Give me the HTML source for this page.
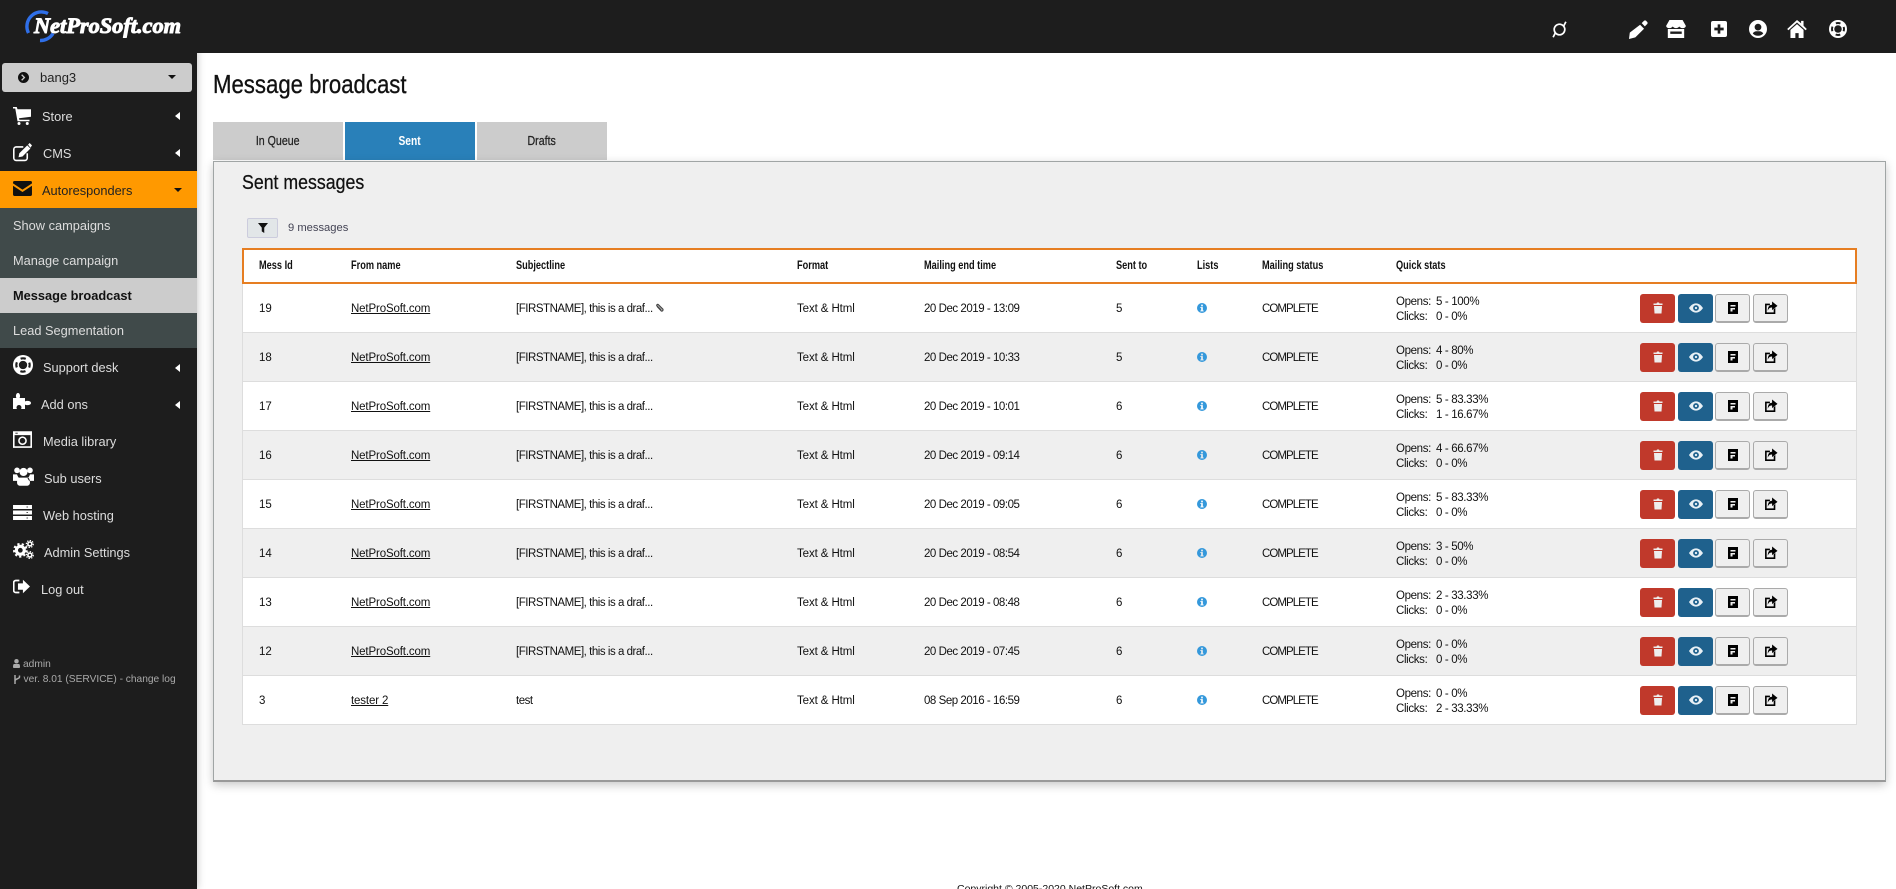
<!DOCTYPE html>
<html><head><meta charset="utf-8"><title>Message broadcast</title>
<style>
*{box-sizing:border-box}
html,body{margin:0;padding:0;width:1896px;height:889px;overflow:hidden;background:#fff;font-family:"Liberation Sans",sans-serif;color:#111}
#root{position:absolute;left:0;top:0;width:1896px;height:889px;overflow:hidden;background:#fff}
.a{position:absolute}
.t{position:absolute;white-space:nowrap;line-height:18px;transform:translateY(-9px)}
#top{left:0;top:0;width:1896px;height:53px;background:#1d1d1d;z-index:3}
#side{left:0;top:0;width:197px;height:889px;background:#1d1d1d;box-shadow:0 0 8px rgba(0,0,0,.25);z-index:2}
.m{font-size:12.8px;color:#ddd}
.sub{left:0;width:197px;background:#404a4a}
.i{position:absolute;fill:#fff}
.tab{position:absolute;top:122px;height:38px;width:130px;background:#ccc;text-align:center;line-height:38px;font-size:12.5px;color:#222;-webkit-text-stroke:.25px #222}
.tab span{display:inline-block;transform:scaleX(.85)}
#panel{left:213px;top:161px;width:1673px;height:621px;background:#efefef;border:1px solid #a0a5a5;border-bottom:2px solid #999;box-shadow:0 3px 9px rgba(0,0,0,.22)}
table{position:absolute;left:242px;top:248px;width:1615px;border-collapse:separate;border-spacing:0;table-layout:fixed;font-size:11.5px;color:#111}
th{height:36px;text-align:left;padding:0 0 0 17px;font-size:11.5px;background:#fff;border-top:2px solid #e67e22;border-bottom:2px solid #e67e22;color:#111;white-space:nowrap}
th span{display:inline-block;transform:scaleX(.8);transform-origin:left center}
th:first-child{border-left:2px solid #e67e22;padding-left:15px}th:last-child{border-right:2px solid #e67e22}
td{height:49px;padding:4px 0 0 17px;background:#fff;border-bottom:1px solid #ddd;line-height:15.5px;white-space:nowrap}
td:first-child{border-left:1px solid #ddd;padding-left:16px}td:last-child{border-right:1px solid #ddd}
td:nth-child(2){letter-spacing:-.14px}
td:nth-child(3){letter-spacing:-.47px}
td:nth-child(4){letter-spacing:-.1px}
td:nth-child(5){letter-spacing:-.46px}
td:nth-child(8){font-size:11.5px;letter-spacing:-.95px}
td:nth-child(9){letter-spacing:-.35px}
td:nth-child(7) svg{vertical-align:-1px}
tr.e td{background:#efefef}
td u{color:#111}
td i{font-style:normal;display:inline-block;width:40px}
.b{position:absolute;height:29px;width:35px;border-radius:3px}
.r{background:#c0392b;left:17px}
.v{background:#1f618d;left:55px}
.d{background:#efefef;border:1px solid #aaa;border-bottom-width:2px}
.d1{left:92px}.d2{left:130px}
.b svg{position:absolute;left:50%;top:50%;transform:translate(-50%,-50%)}
td.act{position:relative;padding:0}
.w{position:relative;height:29px}
</style></head><body>
<svg width="0" height="0" style="position:absolute">
<symbol id="trash" viewBox="0 0 24 24"><path d="M3 3h6l1-2h4l1 2h6v3H3zM4 8h16l-1 15H5z"/></symbol>
<symbol id="eye" viewBox="0 0 24 24"><path fill-rule="evenodd" d="M12 4C6 4 2 9 0 12c2 3 6 8 12 8s10-5 12-8c-2-3-6-8-12-8zm0 3a5 5 0 1 1 0 10 5 5 0 0 1 0-10zm0 3a2 2 0 1 0 0 4 2 2 0 0 0 0-4z"/></symbol>
<symbol id="doc" viewBox="0 0 24 24"><path fill-rule="evenodd" d="M2 0h20v24H2zM7 6v3h10V6zM7 12v7h4v-4h5v-3z"/></symbol>
<symbol id="share" viewBox="0 0 24 24"><path d="M1 4h9v3H4v13h13v-6l3-2v11H1z"/><path d="M14 0l10 8-10 8v-5c-4 0-6 1-8 6 0-7 3-11 8-11z"/></symbol>
<symbol id="info" viewBox="0 0 24 24"><path fill-rule="evenodd" d="M12 0a12 12 0 1 1 0 24 12 12 0 0 1 0-24zM10 4v4h4V4zM8 10v2h2v6H8v2h8v-2h-2v-8z"/></symbol>
<symbol id="life" viewBox="0 0 24 24"><circle cx="12" cy="12" r="12" fill="#fff"/><circle cx="12" cy="12" r="5" fill="#1d1d1d"/><circle cx="12" cy="12" r="8" fill="none" stroke="#1d1d1d" stroke-width="2.600" stroke-dasharray="6.280 6.280" stroke-dashoffset="3.140"/></symbol>
</svg>
<div id="root">

<div id="top" class="a">
 <svg class="a" style="left:0;top:0" width="197" height="53" viewBox="0 0 197 53">
  <path d="M28.500 33A14.500 14.500 0 0 1 48 13.500M53 33.500A14.500 14.500 0 0 1 40 40.500" fill="none" stroke="#2f6fe8" stroke-width="3.400"/>
  <text x="34" y="33" font-family="Liberation Serif,serif" font-style="italic" font-weight="bold" font-size="22" fill="#fff" stroke="#fff" stroke-width="1" stroke-linejoin="round" textLength="147" lengthAdjust="spacingAndGlyphs">NetProSoft.com</text>
 </svg>
 <svg class="i" style="left:1551px;top:21px" width="17" height="17" viewBox="0 0 24 24"><circle cx="12" cy="12" r="7.500" fill="none" stroke="#fff" stroke-width="2.400"/><path d="M3 23l3-6M21 1l-3 6" stroke="#fff" stroke-width="2.400" fill="none"/></svg>
 <svg class="i" style="left:1629px;top:20px" width="19" height="19" viewBox="0 0 24 24"><path d="M14 6l5 5-11 11-8 2 1-8zM16 4l3-3a2 2 0 0 1 2.500 0l1.500 1.500a2 2 0 0 1 0 2.500l-3 3z"/></svg>
 <svg class="i" style="left:1665px;top:20px" width="22" height="18" viewBox="0 0 24 22"><path d="M4 0h16l4 7c0 2-2 3-4 3s-3-1-4-2c-1 1-2 2-4 2s-3-1-4-2c-1 1-2 2-4 2S0 9 0 7zM2 11h20v11H2zM5 14v3h14v-3z" fill-rule="evenodd"/></svg>
 <svg class="i" style="left:1711px;top:21px" width="16" height="16" viewBox="0 0 24 24"><path fill-rule="evenodd" d="M3 0h18a3 3 0 0 1 3 3v18a3 3 0 0 1-3 3H3a3 3 0 0 1-3-3V3a3 3 0 0 1 3-3zm7 5v5H5v4h5v5h4v-5h5v-4h-5V5z"/></svg>
 <svg class="i" style="left:1749px;top:20px" width="18" height="18" viewBox="0 0 24 24"><path fill-rule="evenodd" d="M12 0a12 12 0 1 1 0 24 12 12 0 0 1 0-24zm0 5a4.500 4.500 0 1 0 0 9 4.500 4.500 0 0 0 0-9zm-7 13c2 2 4 3 7 3s5-1 7-3c-1-2-3-3-5-3h-4c-2 0-4 1-5 3z"/></svg>
 <svg class="i" style="left:1787px;top:20px" width="20" height="18" viewBox="0 0 24 22"><path d="M12 0l5 4V1h3v6l4 4-1.500 1.500L12 3 1.500 12.500 0 11zM12 5l8 7v10h-6v-6h-4v6H4V12z"/></svg>
 <svg class="a" style="left:1829px;top:20px" width="18" height="18"><use href="#life"/></svg>
</div>

<div id="side" class="a">
 <div class="a" style="left:2px;top:63px;width:190px;height:29px;background:#ccc;border-radius:3px"></div>
 <svg class="a" style="left:18px;top:72px" width="11" height="11" viewBox="0 0 24 24"><path fill="#111" fill-rule="evenodd" d="M12 0a12 12 0 1 1 0 24 12 12 0 0 1 0-24zM9 5L7 7l5 5-5 5 2 2 7-7z"/></svg>
 <div class="t" style="left:40px;top:78px;font-size:13px;color:#222">bang3</div>
 <div class="a" style="left:168px;top:75px;border:4px solid transparent;border-top:4px solid #111;border-bottom:0"></div>

 <svg class="i" style="left:13px;top:107px" width="18" height="18" viewBox="0 0 24 24"><path d="M0 0h5l1 3h18v10l-16 2 .4 2H22v2H6L3 2H0z"/><circle cx="8" cy="22" r="2"/><circle cx="19" cy="22" r="2"/></svg>
 <div class="t m" style="left:42px;top:116.500px">Store</div>
 <div class="a" style="left:175px;top:112px;border:4px solid transparent;border-right:5px solid #fff;border-left:0"></div>

 <svg class="i" style="left:13px;top:143px" width="19" height="19" viewBox="0 0 24 24"><path fill="none" stroke="#fff" stroke-width="2" d="M13 5H4a3 3 0 0 0-3 3v11a3 3 0 0 0 3 3h11a3 3 0 0 0 3-3v-6"/><path d="M18 3l4 4-10 10-5 1 1-5zM19 2l2-2 3 3-2 3z"/></svg>
 <div class="t m" style="left:43px;top:153.500px">CMS</div>
 <div class="a" style="left:175px;top:149px;border:4px solid transparent;border-right:5px solid #fff;border-left:0"></div>

 <div class="a" style="left:0;top:171px;width:197px;height:37px;background:#f90"></div>
 <svg class="a" style="left:13px;top:181px" width="19" height="15" viewBox="0 0 24 19"><path fill="#111" d="M2 0h20a2 2 0 0 1 2 2v1L12 11 0 3V2a2 2 0 0 1 2-2zM0 6l12 8 12-8v11a2 2 0 0 1-2 2H2a2 2 0 0 1-2-2z"/></svg>
 <div class="t m" style="left:42px;top:190.500px;color:#222">Autoresponders</div>
 <div class="a" style="left:174px;top:188px;border:4px solid transparent;border-top:4px solid #111;border-bottom:0"></div>

 <div class="a sub" style="top:208px;height:70px"></div>
 <div class="t m" style="left:13px;top:225.500px">Show campaigns</div>
 <div class="t m" style="left:13px;top:260.500px">Manage campaign</div>
 <div class="a" style="left:0;top:278px;width:197px;height:35px;background:#ccc"></div>
 <div class="t m" style="left:13px;top:296px;color:#111;font-weight:bold">Message broadcast</div>
 <div class="a sub" style="top:313px;height:35px"></div>
 <div class="t m" style="left:13px;top:330.500px">Lead Segmentation</div>

 <svg class="a" style="left:13px;top:355px" width="20" height="20"><use href="#life"/></svg>
 <div class="t m" style="left:43px;top:367.700px">Support desk</div>
 <div class="a" style="left:175px;top:363.500px;border:4px solid transparent;border-right:5px solid #fff;border-left:0"></div>

 <svg class="i" style="left:13px;top:392px" width="18" height="17" viewBox="0 0 18 17"><path d="M0 6h3.500c-1-1-.8-5 1.500-5s2.500 4 1.500 5H12v3.500c1-1 6-1 6 1.500s-5 2.500-6 1.500V17H8c1-1 .5-4-2-4s-3 3-2 4H0z"/></svg>
 <div class="t m" style="left:41px;top:404.500px">Add ons</div>
 <div class="a" style="left:175px;top:400.500px;border:4px solid transparent;border-right:5px solid #fff;border-left:0"></div>

 <svg class="i" style="left:13px;top:431px" width="19" height="17" viewBox="0 0 24 21"><path fill-rule="evenodd" d="M0 0h24v21H0zM2 5v14h20V5zM3 2v1h3V2zM12 6.500a5.500 5.500 0 1 1 0 11 5.500 5.500 0 0 1 0-11zm0 2a3.500 3.500 0 1 0 0 7 3.500 3.500 0 0 0 0-7z"/></svg>
 <div class="t m" style="left:43px;top:441.500px">Media library</div>

 <svg class="i" style="left:13px;top:466px" width="21" height="20" viewBox="0 0 26 24"><circle cx="5" cy="5" r="3.500"/><circle cx="21" cy="5" r="3.500"/><circle cx="13" cy="7" r="5"/><path d="M0 10h5c1 3 2 4 3 5l-2 3H0zM26 10h-5c-1 3-2 4-3 5l2 3h6zM8 14h10c2 0 3 3 3 6 0 3-2 4-4 4H9c-2 0-4-1-4-4 0-3 1-6 3-6z"/></svg>
 <div class="t m" style="left:44px;top:478.500px">Sub users</div>

 <svg class="i" style="left:13px;top:505px" width="19" height="15" viewBox="0 0 24 19"><path fill-rule="evenodd" d="M0 0h24v5H0zM0 7h24v5H0zM0 14h24v5H0zM17 2v1h2V2zM17 9v1h2V9zM17 16v1h2v-1z"/></svg>
 <div class="t m" style="left:43px;top:515.500px">Web hosting</div>

 <svg class="i" style="left:13px;top:540px" width="21" height="19" viewBox="0 0 26 24"><circle cx="9" cy="13" r="5" fill="none" stroke="#fff" stroke-width="4"/><circle cx="9" cy="13" r="8" fill="none" stroke="#fff" stroke-width="2.500" stroke-dasharray="2.800 2.800"/><circle cx="21" cy="5" r="2.500" fill="none" stroke="#fff" stroke-width="2"/><circle cx="21" cy="5" r="4.400" fill="none" stroke="#fff" stroke-width="1.500" stroke-dasharray="1.700 1.700"/><circle cx="21" cy="19" r="2.500" fill="none" stroke="#fff" stroke-width="2"/><circle cx="21" cy="19" r="4.400" fill="none" stroke="#fff" stroke-width="1.500" stroke-dasharray="1.700 1.700"/></svg>
 <div class="t m" style="left:44px;top:552.600px">Admin Settings</div>

 <svg class="i" style="left:13px;top:579px" width="17" height="15" viewBox="0 0 24 21"><path fill="none" stroke="#fff" stroke-width="2.400" d="M9 2H4a3 3 0 0 0-3 3v11a3 3 0 0 0 3 3h5"/><path d="M14 1l10 9.500L14 20v-5H7V6h7z"/></svg>
 <div class="t m" style="left:41px;top:589.700px">Log out</div>

 <svg class="a" style="left:13px;top:659px" width="7" height="9" viewBox="0 0 14 18"><circle cx="7" cy="4.500" r="4.500" fill="#aaa"/><path fill="#aaa" d="M2 10h10c1 0 2 2 2 5s-1 3-2 3H2c-1 0-2 0-2-3s1-5 2-5z"/></svg>
 <div class="t" style="left:23px;top:665px;font-size:10.200px;color:#aaa">admin</div>
 <svg class="a" style="left:13px;top:674px" width="8" height="11" viewBox="0 0 16 22"><path fill="none" stroke="#aaa" stroke-width="3" d="M4 2v18M13 3v3c0 4-9 3-9 8"/></svg>
 <div class="t" style="left:23.500px;top:680px;font-size:10.200px;color:#aaa">ver. 8.01 (SERVICE) - change log</div>
</div>

<div class="t" style="left:213px;top:84px;font-size:26px;color:#111;-webkit-text-stroke:.3px #111;transform:translateY(-9px) scaleX(.853);transform-origin:left center">Message broadcast</div>
<div class="tab" style="left:213px"><span>In Queue</span></div>
<div class="tab" style="left:345px;background:#2980b9;color:#fff;font-weight:bold;-webkit-text-stroke:0"><span style="transform:scaleX(.82)">Sent</span></div>
<div class="tab" style="left:477px"><span>Drafts</span></div>

<div id="panel" class="a"></div>
<div class="t" style="left:242px;top:183px;font-size:20.500px;color:#111;-webkit-text-stroke:.25px #111;transform:translateY(-9px) scaleX(.865);transform-origin:left center">Sent messages</div>
<div class="a" style="left:247px;top:218px;width:31px;height:20px;background:#e2e6e8;border:1px solid #ccd;border-radius:2px"></div>
<svg class="a" style="left:257.500px;top:223px" width="10" height="10" viewBox="0 0 24 24"><path fill="#111" d="M0 0h24L15 11v13l-6-4v-9z"/></svg>
<div class="t" style="left:288px;top:228px;font-size:11.200px;color:#445">9 messages</div>

<table>
<colgroup><col style="width:92px"><col style="width:165px"><col style="width:281px"><col style="width:127px"><col style="width:192px"><col style="width:81px"><col style="width:65px"><col style="width:134px"><col style="width:244px"><col></colgroup>
<tr><th><span>Mess Id</span></th><th><span>From name</span></th><th><span>Subjectline</span></th><th><span>Format</span></th><th><span>Mailing end time</span></th><th><span>Sent to</span></th><th><span>Lists</span></th><th><span>Mailing status</span></th><th><span>Quick stats</span></th><th></th></tr>
<tr><td>19</td><td><u>NetProSoft.com</u></td><td>[FIRSTNAME], this is a draf... <svg width="10" height="10" viewBox="0 0 24 24" style="vertical-align:-1px"><path d="M5 8l10 11a3 3 0 0 0 4-4L8 4a2 2 0 0 0-3 3l10 10" fill="none" stroke="#444" stroke-width="3"/></svg></td><td>Text &amp; Html</td><td>20 Dec 2019 - 13:09</td><td>5</td><td><svg width="10" height="10" fill="#3498db"><use href="#info"/></svg></td><td>COMPLETE</td><td><i>Opens:</i>5 - 100%<br><i>Clicks:</i>0 - 0%</td><td class="act"><div class="w"><span class="b r"><svg width="12" height="12" fill="#eee"><use href="#trash"/></svg></span><span class="b v"><svg width="14" height="14" fill="#e8f0f5"><use href="#eye"/></svg></span><span class="b d d1"><svg width="12" height="12" fill="#000"><use href="#doc"/></svg></span><span class="b d d2"><svg width="13" height="13" fill="#000"><use href="#share"/></svg></span></div></td></tr>
<tr class="e"><td>18</td><td><u>NetProSoft.com</u></td><td>[FIRSTNAME], this is a draf...</td><td>Text &amp; Html</td><td>20 Dec 2019 - 10:33</td><td>5</td><td><svg width="10" height="10" fill="#3498db"><use href="#info"/></svg></td><td>COMPLETE</td><td><i>Opens:</i>4 - 80%<br><i>Clicks:</i>0 - 0%</td><td class="act"><div class="w"><span class="b r"><svg width="12" height="12" fill="#eee"><use href="#trash"/></svg></span><span class="b v"><svg width="14" height="14" fill="#e8f0f5"><use href="#eye"/></svg></span><span class="b d d1"><svg width="12" height="12" fill="#000"><use href="#doc"/></svg></span><span class="b d d2"><svg width="13" height="13" fill="#000"><use href="#share"/></svg></span></div></td></tr>
<tr><td>17</td><td><u>NetProSoft.com</u></td><td>[FIRSTNAME], this is a draf...</td><td>Text &amp; Html</td><td>20 Dec 2019 - 10:01</td><td>6</td><td><svg width="10" height="10" fill="#3498db"><use href="#info"/></svg></td><td>COMPLETE</td><td><i>Opens:</i>5 - 83.33%<br><i>Clicks:</i>1 - 16.67%</td><td class="act"><div class="w"><span class="b r"><svg width="12" height="12" fill="#eee"><use href="#trash"/></svg></span><span class="b v"><svg width="14" height="14" fill="#e8f0f5"><use href="#eye"/></svg></span><span class="b d d1"><svg width="12" height="12" fill="#000"><use href="#doc"/></svg></span><span class="b d d2"><svg width="13" height="13" fill="#000"><use href="#share"/></svg></span></div></td></tr>
<tr class="e"><td>16</td><td><u>NetProSoft.com</u></td><td>[FIRSTNAME], this is a draf...</td><td>Text &amp; Html</td><td>20 Dec 2019 - 09:14</td><td>6</td><td><svg width="10" height="10" fill="#3498db"><use href="#info"/></svg></td><td>COMPLETE</td><td><i>Opens:</i>4 - 66.67%<br><i>Clicks:</i>0 - 0%</td><td class="act"><div class="w"><span class="b r"><svg width="12" height="12" fill="#eee"><use href="#trash"/></svg></span><span class="b v"><svg width="14" height="14" fill="#e8f0f5"><use href="#eye"/></svg></span><span class="b d d1"><svg width="12" height="12" fill="#000"><use href="#doc"/></svg></span><span class="b d d2"><svg width="13" height="13" fill="#000"><use href="#share"/></svg></span></div></td></tr>
<tr><td>15</td><td><u>NetProSoft.com</u></td><td>[FIRSTNAME], this is a draf...</td><td>Text &amp; Html</td><td>20 Dec 2019 - 09:05</td><td>6</td><td><svg width="10" height="10" fill="#3498db"><use href="#info"/></svg></td><td>COMPLETE</td><td><i>Opens:</i>5 - 83.33%<br><i>Clicks:</i>0 - 0%</td><td class="act"><div class="w"><span class="b r"><svg width="12" height="12" fill="#eee"><use href="#trash"/></svg></span><span class="b v"><svg width="14" height="14" fill="#e8f0f5"><use href="#eye"/></svg></span><span class="b d d1"><svg width="12" height="12" fill="#000"><use href="#doc"/></svg></span><span class="b d d2"><svg width="13" height="13" fill="#000"><use href="#share"/></svg></span></div></td></tr>
<tr class="e"><td>14</td><td><u>NetProSoft.com</u></td><td>[FIRSTNAME], this is a draf...</td><td>Text &amp; Html</td><td>20 Dec 2019 - 08:54</td><td>6</td><td><svg width="10" height="10" fill="#3498db"><use href="#info"/></svg></td><td>COMPLETE</td><td><i>Opens:</i>3 - 50%<br><i>Clicks:</i>0 - 0%</td><td class="act"><div class="w"><span class="b r"><svg width="12" height="12" fill="#eee"><use href="#trash"/></svg></span><span class="b v"><svg width="14" height="14" fill="#e8f0f5"><use href="#eye"/></svg></span><span class="b d d1"><svg width="12" height="12" fill="#000"><use href="#doc"/></svg></span><span class="b d d2"><svg width="13" height="13" fill="#000"><use href="#share"/></svg></span></div></td></tr>
<tr><td>13</td><td><u>NetProSoft.com</u></td><td>[FIRSTNAME], this is a draf...</td><td>Text &amp; Html</td><td>20 Dec 2019 - 08:48</td><td>6</td><td><svg width="10" height="10" fill="#3498db"><use href="#info"/></svg></td><td>COMPLETE</td><td><i>Opens:</i>2 - 33.33%<br><i>Clicks:</i>0 - 0%</td><td class="act"><div class="w"><span class="b r"><svg width="12" height="12" fill="#eee"><use href="#trash"/></svg></span><span class="b v"><svg width="14" height="14" fill="#e8f0f5"><use href="#eye"/></svg></span><span class="b d d1"><svg width="12" height="12" fill="#000"><use href="#doc"/></svg></span><span class="b d d2"><svg width="13" height="13" fill="#000"><use href="#share"/></svg></span></div></td></tr>
<tr class="e"><td>12</td><td><u>NetProSoft.com</u></td><td>[FIRSTNAME], this is a draf...</td><td>Text &amp; Html</td><td>20 Dec 2019 - 07:45</td><td>6</td><td><svg width="10" height="10" fill="#3498db"><use href="#info"/></svg></td><td>COMPLETE</td><td><i>Opens:</i>0 - 0%<br><i>Clicks:</i>0 - 0%</td><td class="act"><div class="w"><span class="b r"><svg width="12" height="12" fill="#eee"><use href="#trash"/></svg></span><span class="b v"><svg width="14" height="14" fill="#e8f0f5"><use href="#eye"/></svg></span><span class="b d d1"><svg width="12" height="12" fill="#000"><use href="#doc"/></svg></span><span class="b d d2"><svg width="13" height="13" fill="#000"><use href="#share"/></svg></span></div></td></tr>
<tr><td>3</td><td><u>tester 2</u></td><td>test</td><td>Text &amp; Html</td><td>08 Sep 2016 - 16:59</td><td>6</td><td><svg width="10" height="10" fill="#3498db"><use href="#info"/></svg></td><td>COMPLETE</td><td><i>Opens:</i>0 - 0%<br><i>Clicks:</i>2 - 33.33%</td><td class="act"><div class="w"><span class="b r"><svg width="12" height="12" fill="#eee"><use href="#trash"/></svg></span><span class="b v"><svg width="14" height="14" fill="#e8f0f5"><use href="#eye"/></svg></span><span class="b d d1"><svg width="12" height="12" fill="#000"><use href="#doc"/></svg></span><span class="b d d2"><svg width="13" height="13" fill="#000"><use href="#share"/></svg></span></div></td></tr>
</table>

<div class="a" style="left:957px;top:882px;font-size:10.500px;line-height:14px;white-space:nowrap;color:#111">Copyright © 2005-2020 NetProSoft.com</div>
</div>
</body></html>
